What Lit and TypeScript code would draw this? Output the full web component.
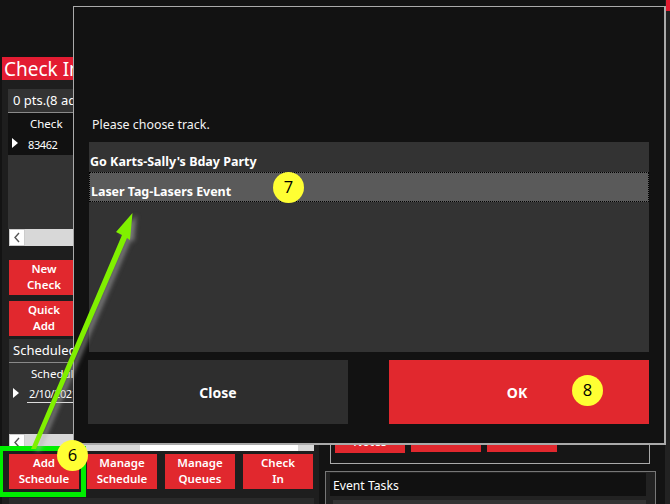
import { LitElement, html, css, svg } from "lit";
import { customElement } from "lit/decorators.js";

const chevron = html`<svg class="chev" viewBox="0 0 16 17" width="16" height="17"><path d="M10 4 L6 8.5 L10 13" fill="none" stroke="#555" stroke-width="1.4"/></svg>`;
const rowArrow = html`<svg class="tri" viewBox="0 0 6 10" width="6" height="10"><path d="M0 0 L6 5 L0 10 Z" fill="#fff"/></svg>`;

const scrollbar = html`<div class="scroll"><div class="scroll-btn">${chevron}</div><div class="scroll-thumb"></div><div class="scroll-track"></div><div class="scroll-end"></div></div>`;

@customElement("app-root")
export class AppRoot extends LitElement {
  static styles = css`
    :host { display: block; position: relative; width: 670px; height: 504px; overflow: hidden; background: #131313; font-family: "Noto Sans", "Open Sans", sans-serif; color: #fff; }
    * { box-sizing: border-box; }
    .screen { display: grid; grid-template-columns: 319px 346px 5px; height: 504px; }

    .left { background: #1e1e1e; margin: 57px 0 0 2px; display: flex; flex-direction: column; }
    .title { height: 23px; background: #e31c32; font-size: 19px; line-height: 24px; padding-left: 2px; white-space: nowrap; margin-bottom: 9px; }
    .group { margin-left: 6px; width: 305px; display: flex; flex-direction: column; }
    .group.second { margin-left: 7px; }
    .ghead { height: 24px; background: #333; border-bottom: 1px solid #8a8a8a; font-size: 13px; line-height: 23px; padding-left: 5px; white-space: nowrap; overflow: hidden; }
    .second .ghead { padding-left: 4px; }
    .gbody { background: #333; position: relative; font-size: 11.5px; }
    .first .gbody { height: 116px; }
    .second .gbody { height: 71px; }
    .grow { display: flex; align-items: center; height: 21px; padding-left: 4px; }
    .first .grow { background: #111; }
    .tri { flex: none; margin: -4px 10px 0 0; }
    .num { font-size: 11px; letter-spacing: -0.4px; }
    .chead { padding-left: 22px; }
    .underlined { border-bottom: 1px solid #ddd; line-height: 15px; height: 17px; padding: 0 2px; display: inline-block; margin-left: -2px; }
    .scroll { display: flex; height: 17px; background: #fff; }
    .first .scroll { margin-left: 1px; }
    .scroll-btn { width: 16px; background: #fff; border: 1px solid #ccc; }
    .chev { display: block; margin: -1px; }
    .scroll-thumb { width: 115px; background: #d8d8d8; }
    .scroll-track { flex: 1; background: #fff; }
    .scroll-end { width: 16px; background: #d8d8d8; }
    .stack { display: flex; flex-direction: column; gap: 6px; margin: 14px 0 3px 7px; }
    .btn { width: 70px; height: 35px; background: #e1282e; color: #fff; font-size: 11.5px; font-weight: 600; line-height: 15.7px; padding-bottom: 1px; display: flex; align-items: center; justify-content: center; text-align: center; }
    .actions { display: flex; gap: 8px; margin: 3px 0 9px 7px; }
    .foot { margin-left: 7px; width: 305px; height: 6px; background: #2a2a2a; }

    .right { position: relative; display: flex; flex-direction: column; padding-left: 6px; }
    .upper { margin-left: 5px; margin-top: 425px; width: 320px; height: 39px; border: 1px solid #aaa; border-top: 0; display: flex; gap: 6px; padding-left: 4px; align-items: flex-start; background: #161616; }
    .mini { width: 70px; height: 28px; background: #e1282e; font-size: 11.5px; font-weight: 600; line-height: 15px; padding-bottom: 4px; text-align: center; display: flex; align-items: flex-end; justify-content: center; }
    .mini + .mini { height: 27px; }
    .tasks { margin-top: 7px; width: 331px; flex: 1; border: 1px solid #777; border-bottom: 0; background: #222; padding: 1px 9px 0 4px; }
    .tasks-head { height: 23px; background: #111; font-size: 12.2px; line-height: 25px; padding-left: 3px; }
    .tasks-body { height: 10px; margin: 4px 0 0 3px; background: #333; }

    .rail { background: #222; position: relative; }
    .rail-red { height: 11px; margin-left: 1px; background: #e31c32; }

    .modal { position: absolute; left: 73px; top: 6px; width: 593px; height: 439px; background: #121212; border: 1px solid #aaa; border-right-width: 2px; border-bottom-width: 2px; padding: 107px 15px 0 15px; display: flex; flex-direction: column; }
    .prompt { font-size: 12.4px; line-height: 22px; height: 28px; padding-left: 3px; color: #f4f4f4; }
    .list { height: 210px; background: #333; font-size: 12.5px; font-weight: 700; }
    .item { height: 30px; line-height: 32px; padding-left: 1px; }
    .item:first-child { padding-top: 4px; }
    .item.sel { background: #5a5a5a; outline: 1px dotted #000; outline-offset: -1px; padding-left: 2px; line-height: 39px; letter-spacing: -0.05px; }
    .modal-actions { display: flex; justify-content: space-between; margin-top: 8px; margin-left: -1px; }
    .big { width: 260px; height: 64px; display: flex; align-items: center; justify-content: center; font-size: 14px; font-weight: 700; background: #2e2e2e; }
    .big.ok { background: #e1282e; padding-right: 4px; }

    .badge { position: absolute; width: 31px; height: 31px; border-radius: 50%; background: #ffff33; color: #000; font-family: "Open Sans", sans-serif; font-size: 16.5px; line-height: 29px; text-align: center; }
    .b6 { left: 57px; top: 440px; }
    .b7 { left: 273px; top: 172px; }
    .b8 { left: 572px; top: 375px; }
    .mark { position: absolute; left: -2px; top: 446px; width: 88px; height: 51px; border: 5px solid #00ee00; }
    .arrow { position: absolute; left: 0; top: 0; width: 670px; height: 504px; pointer-events: none; filter: drop-shadow(4px 2px 2px rgba(175,175,175,.55)); }
  `;

  render() {
    return html`
      <div class="screen">
        <div class="left">
          <div class="title">Check In</div>
          <div class="group first">
            <div class="ghead">0 pts.(8 additional)</div>
            <div class="gbody">
              <div class="grow chead">Check</div>
              <div class="grow">${rowArrow}<span class="num">83462</span></div>
            </div>
            ${scrollbar}
          </div>
          <div class="stack">
            <div class="btn">New<br />Check</div>
            <div class="btn">Quick<br />Add</div>
          </div>
          <div class="group second">
            <div class="ghead">Scheduled</div>
            <div class="gbody">
              <div class="grow chead">Scheduled</div>
              <div class="grow">${rowArrow}<span class="underlined num">2/10/2021</span></div>
            </div>
            ${scrollbar}
          </div>
          <div class="actions">
            <div class="btn">Add<br />Schedule</div>
            <div class="btn">Manage<br />Schedule</div>
            <div class="btn">Manage<br />Queues</div>
            <div class="btn">Check<br />In</div>
          </div>
          <div class="foot"></div>
        </div>
        <div class="right">
          <div class="upper">
            <div class="mini">Notes</div>
            <div class="mini"></div>
            <div class="mini"></div>
          </div>
          <div class="tasks">
            <div class="tasks-head">Event Tasks</div>
            <div class="tasks-body"></div>
          </div>
        </div>
        <div class="rail"><div class="rail-red"></div></div>
      </div>

      <div class="modal">
        <div class="prompt">Please choose track.</div>
        <div class="list">
          <div class="item">Go Karts-Sally's Bday Party</div>
          <div class="item sel">Laser Tag-Lasers Event</div>
        </div>
        <div class="modal-actions">
          <div class="big">Close</div>
          <div class="big ok">OK</div>
        </div>
      </div>

      <div class="mark"></div>
      <svg class="arrow" viewBox="0 0 670 504">
        ${svg`<path d="M132.5 213 L116 232 L122 235 L31 449 L36 449 L127 238 L130 240 Z" fill="#80f000"/>`}
      </svg>
      <div class="badge b6">6</div>
      <div class="badge b7">7</div>
      <div class="badge b8">8</div>
    `;
  }
}
